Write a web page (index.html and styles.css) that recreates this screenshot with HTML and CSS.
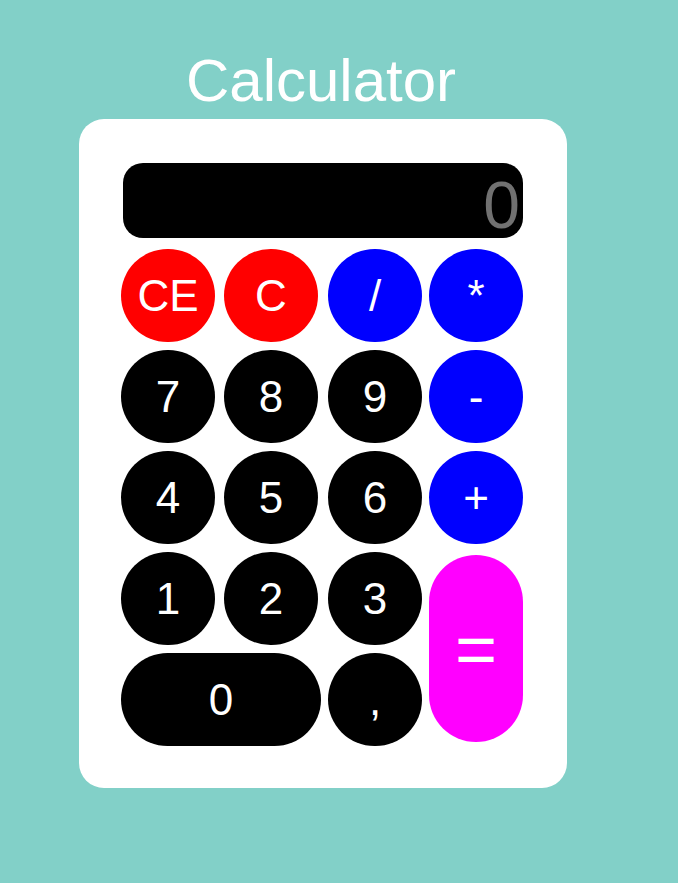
FILE: index.html
```html
<!DOCTYPE html>
<html>
<head>
<meta charset="utf-8">
<link rel="stylesheet" href="styles.css">
</head>
<body>
<div class="page">
  <h1 class="title">Calculator</h1>
  <div class="calc">
    <div class="display">0</div>
    <div class="keys">
      <div class="key red">CE</div>
      <div class="key red">C</div>
      <div class="key blue">/</div>
      <div class="key blue">*</div>
      <div class="key">7</div>
      <div class="key">8</div>
      <div class="key">9</div>
      <div class="key blue">-</div>
      <div class="key">4</div>
      <div class="key">5</div>
      <div class="key">6</div>
      <div class="key blue">+</div>
      <div class="key">1</div>
      <div class="key">2</div>
      <div class="key">3</div>
      <div class="key equals">=</div>
      <div class="key zero">0</div>
      <div class="key">,</div>
    </div>
  </div>
</div>
</body>
</html>
```
FILE: styles.css
```css
html, body {
  margin: 0;
  padding: 0;
  background: #82d0c8;
  font-family: "Liberation Sans", Arial, sans-serif;
}
.page {
  width: 678px;
  height: 883px;
  padding-top: 47px;
  box-sizing: border-box;
}
.title {
  margin: 0 0 5px 75px;
  width: 492px;
  text-align: center;
  font-weight: normal;
  font-size: 60px;
  line-height: 67px;
  color: #fff;
}
.calc {
  margin-left: 79px;
  width: 488px;
  height: 669px;
  box-sizing: border-box;
  padding: 44px 44px 0 42px;
  background: #fff;
  border-radius: 25px;
}
.display {
  margin-left: 2px;
  height: 75px;
  box-sizing: border-box;
  padding-right: 3px;
  background: #000;
  border-radius: 20px;
  color: #717171;
  font-size: 66px;
  line-height: 84px;
  text-align: right;
}
.keys {
  margin-top: 11px;
  display: grid;
  grid-template-columns: 103px 104px 101px 94px;
  grid-template-rows: repeat(5, 93px);
  row-gap: 8px;
}
.key {
  width: 94px;
  height: 93px;
  border-radius: 47px;
  background: #000;
  color: #fff;
  font-size: 44px;
  display: flex;
  align-items: center;
  justify-content: center;
}
.red { background: #f00; }
.blue { background: #00f; }
.equals {
  grid-column: 4;
  grid-row: 4 / span 2;
  margin-top: 3px;
  height: 187px;
  background: #f0f;
  font-size: 72px;
}
.zero {
  grid-column: 1 / span 2;
  width: 200px;
}
```
